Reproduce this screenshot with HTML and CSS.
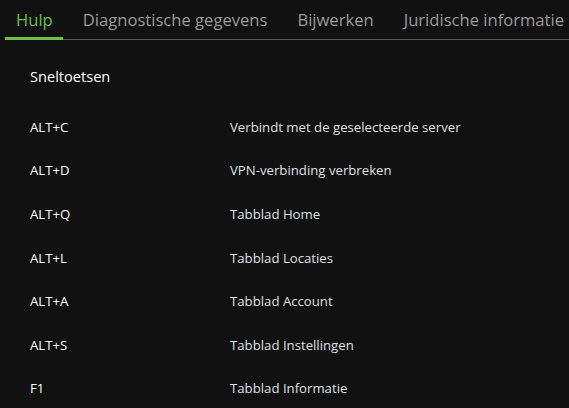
FILE: index.html
```html
<!DOCTYPE html>
<html lang="nl">
  <head>
    <meta charset="UTF-8" />
    <meta name="viewport" content="width=device-width, initial-scale=1.0" />
    <title>Hulp</title>
    <link rel="stylesheet" href="styles.css">
  </head>
  <body>
    <div class="tabs">
      <div class="tab active">Hulp</div>
      <div class="tab">Diagnostische gegevens</div>
      <div class="tab">Bijwerken</div>
      <div class="tab">Juridische informatie</div>
    </div>
    <div class="content">
      <div class="title">Sneltoetsen</div>
      <table class="keys">
        <tr><td class="key">ALT+C</td><td>Verbindt met de geselecteerde server</td></tr>
        <tr><td class="key">ALT+D</td><td>VPN-verbinding verbreken</td></tr>
        <tr><td class="key">ALT+Q</td><td>Tabblad Home</td></tr>
        <tr><td class="key">ALT+L</td><td>Tabblad Locaties</td></tr>
        <tr><td class="key">ALT+A</td><td>Tabblad Account</td></tr>
        <tr><td class="key">ALT+S</td><td>Tabblad Instellingen</td></tr>
        <tr><td class="key">F1</td><td>Tabblad Informatie</td></tr>
      </table>
    </div>
  </body>
</html>
```

FILE: styles.css
```css
html,
body {
  margin: 0;
  background-color: #111111;
  font-family: "Open Sans", "Noto Sans", sans-serif;
  overflow: hidden;
}

.tabs {
  display: flex;
  gap: 9px;
  margin-left: 5px;
  padding-top: 9px;
  border-bottom: 1px solid #555555;
}

.tab {
  font-size: 16.6px;
  color: #9a9a9a;
  padding: 0 10px 6px 11px;
  line-height: 22px;
  white-space: nowrap;
  border-bottom: 3px solid transparent;
  margin-bottom: -1px;
}

.tab.active {
  color: #6cc04a;
  border-bottom-color: #6cc04a;
}

.content {
  padding: 26px 0 0 30px;
}

.title {
  color: #ffffff;
  font-size: 14.6px;
  line-height: 20px;
  margin-bottom: 19px;
}

.keys {
  border-collapse: collapse;
}

.keys td {
  height: 43.6px;
  padding: 0;
  font-size: 13.2px;
  color: #dde0e4;
  vertical-align: middle;
}

.keys td.key {
  width: 200px;
  color: #ffffff;
}
```
